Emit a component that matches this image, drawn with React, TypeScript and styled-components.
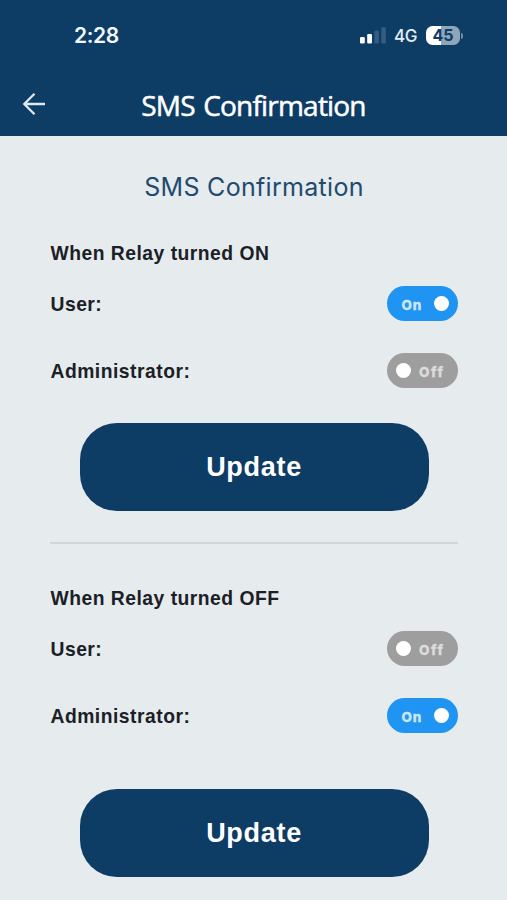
import React, { useState } from "react";
import styled, { createGlobalStyle } from "styled-components";

const navy = "#0d3c65";

const GlobalStyle = createGlobalStyle`
  * { box-sizing: border-box; }
  body { margin: 0; background: #e6ebee; font-family: "Liberation Sans", Arial, sans-serif; }
`;

const Screen = styled.div`
  width: 507px;
  height: 900px;
  overflow: hidden;
  background: #e6ebee;
`;

const Header = styled.header`
  height: 136px;
  background: ${navy};
  color: #fff;
`;

const StatusBar = styled.div`
  height: 71px;
  padding: 0 44px 0 74px;
  display: flex;
  align-items: center;
  justify-content: space-between;
`;

const Clock = styled.span`
  font: 600 21px/24px Inter, sans-serif;
  letter-spacing: -0.4px;
  color: #f1f8ff;
`;

const StatusIcons = styled.div`
  display: flex;
  align-items: center;
`;

const Network = styled.span`
  margin: 1px 0 0 8px;
  width: 32px;
  font: 500 17px/20px Inter, sans-serif;
  letter-spacing: -0.3px;
  color: #e4eef7;
`;

const Battery = styled.div`
  display: flex;
  align-items: center;
`;

const BatteryBody = styled.span`
  width: 34px;
  height: 19px;
  border-radius: 6.5px;
  background: linear-gradient(90deg, #fff 45%, #8fa6ba 45%);
  color: ${navy};
  text-align: center;
  font: 700 16px/19px Inter, sans-serif;
`;

const BatteryTip = styled.span`
  width: 2px;
  height: 6px;
  margin-left: 1px;
  border-radius: 0 2px 2px 0;
  background: #6f8ca6;
`;

const TitleBar = styled.div`
  height: 65px;
  display: grid;
  grid-template-columns: 68px 1fr 68px;
  align-items: center;
`;

const BackButton = styled.button`
  width: 68px;
  height: 65px;
  padding: 1px 0 0 22px;
  border: 0;
  background: none;
  color: #dfe8ef;
  display: flex;
  align-items: center;
`;

const Title = styled.h1`
  margin: 3px 0 0;
  text-align: center;
  white-space: nowrap;
  font: 500 28px/36px "Open Sans", sans-serif;
  letter-spacing: -0.8px;
  word-spacing: 2px;
  -webkit-text-stroke: 0.5px #fff;
`;

const Content = styled.main`
  padding: 33px 49px 0 50px;
`;

const Heading = styled.h2`
  margin: 0 0 34px;
  height: 36px;
  text-align: center;
  font: 400 25px/36px Inter, sans-serif;
  letter-spacing: 0.3px;
  color: #214a70;
`;

const Group = styled.section`
  display: flex;
  flex-direction: column;
`;

const GroupTitle = styled.h3`
  margin: 0;
  height: 28px;
  padding: 1px 0 0 0.5px;
  font: 700 19.3px/28px "Liberation Sans", Arial, sans-serif;
  letter-spacing: 0.5px;
  color: #1b2026;
`;

const Row = styled.div<{ $gap: number }>`
  height: 35px;
  margin-top: ${(p) => p.$gap}px;
  display: flex;
  align-items: center;
  justify-content: space-between;
`;

const Label = styled.span`
  padding: 3px 0 0 0.5px;
  font: 700 19.3px/28px "Liberation Sans", Arial, sans-serif;
  letter-spacing: 0.5px;
  color: #1b2026;
`;

const Toggle = styled.button<{ $on: boolean }>`
  width: 71px;
  height: 35px;
  padding: ${(p) => (p.$on ? "0 9px 0 14.5px" : "0 13.5px 0 9px")};
  border: 0;
  border-radius: 18px;
  display: flex;
  flex-direction: ${(p) => (p.$on ? "row" : "row-reverse")};
  align-items: center;
  justify-content: space-between;
  background: ${(p) => (p.$on ? "#2094f3" : "#9e9e9e")};
  color: ${(p) => (p.$on ? "#c9e6fc" : "#dcdcdc")};
`;

const ToggleText = styled.span<{ $on: boolean }>`
  margin-top: 3px;
  font: 800 13.5px/16px Inter, sans-serif;
  letter-spacing: ${(p) => (p.$on ? 0.9 : 1.5)}px;
  -webkit-text-stroke: 0.3px currentColor;
`;

const Knob = styled.span`
  width: 15px;
  height: 15px;
  border-radius: 50%;
  background: #fff;
`;

const UpdateButton = styled.button<{ $gap: number }>`
  align-self: center;
  width: 349px;
  height: 88px;
  margin-top: ${(p) => p.$gap}px;
  padding: 0;
  border: 0;
  border-radius: 37px;
  background: ${navy};
  color: #fff;
  font: 700 27px/32px "Liberation Sans", Arial, sans-serif;
  letter-spacing: 0.7px;
`;

const Divider = styled.hr`
  height: 2px;
  margin: 31px 0 40px;
  border: 0;
  background: #d0d6da;
`;

function Switch({ initial }: { initial: boolean }) {
  const [on, setOn] = useState(initial);
  return (
    <Toggle $on={on} role="switch" aria-checked={on} onClick={() => setOn(!on)}>
      <ToggleText $on={on}>{on ? "On" : "Off"}</ToggleText>
      <Knob />
    </Toggle>
  );
}

interface RelayProps {
  title: string;
  user: boolean;
  admin: boolean;
  buttonGap: number;
}

function RelayGroup({ title, user, admin, buttonGap }: RelayProps) {
  return (
    <Group>
      <GroupTitle>{title}</GroupTitle>
      <Row $gap={19}>
        <Label>User:</Label>
        <Switch initial={user} />
      </Row>
      <Row $gap={32}>
        <Label>Administrator:</Label>
        <Switch initial={admin} />
      </Row>
      <UpdateButton $gap={buttonGap}>Update</UpdateButton>
    </Group>
  );
}

export default function App() {
  return (
    <Screen>
      <GlobalStyle />
      <Header>
        <StatusBar>
          <Clock>2:28</Clock>
          <StatusIcons>
            <svg width="26" height="17" viewBox="0 0 26 17">
              <rect x="0" y="10" width="4.8" height="6.5" rx="1.3" fill="#fff" />
              <rect x="7.2" y="7" width="4.8" height="9.5" rx="1.3" fill="#fff" />
              <rect x="14.4" y="3.5" width="4.5" height="13" rx="1.3" fill="#355d80" />
              <rect x="21.3" y="0.3" width="4.5" height="16.2" rx="1.3" fill="#355d80" />
            </svg>
            <Network>4G</Network>
            <Battery>
              <BatteryBody>45</BatteryBody>
              <BatteryTip />
            </Battery>
          </StatusIcons>
        </StatusBar>
        <TitleBar>
          <BackButton aria-label="Back">
            <svg width="24" height="24" viewBox="0 0 24 24" fill="none" stroke="currentColor" strokeWidth="2.3">
              <path d="M23 12H2.5M12.5 1.8L2.3 12l10.2 10.2" />
            </svg>
          </BackButton>
          <Title>SMS Confirmation</Title>
        </TitleBar>
      </Header>
      <Content>
        <Heading>SMS Confirmation</Heading>
        <RelayGroup title="When Relay turned ON" user admin={false} buttonGap={35} />
        <Divider />
        <RelayGroup title="When Relay turned OFF" user={false} admin buttonGap={56} />
      </Content>
    </Screen>
  );
}
